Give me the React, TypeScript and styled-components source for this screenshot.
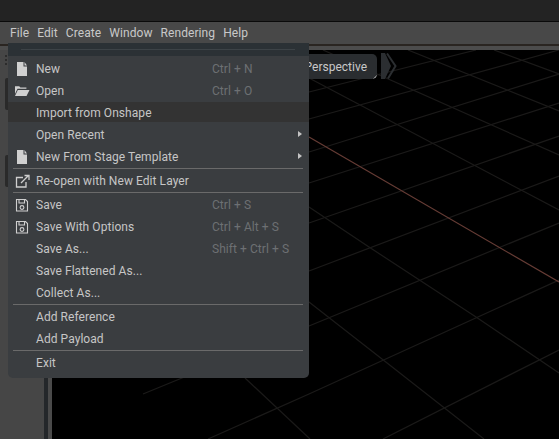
import React from "react";
import styled, { createGlobalStyle } from "styled-components";

const Global = createGlobalStyle`
  html, body { margin: 0; padding: 0; background: #222; }
  body { width: 559px; height: 439px; overflow: hidden; font-family: Roboto, "Liberation Sans", sans-serif; }
`;
const Page = styled.div`
  position: relative; width: 559px; height: 439px; display: flex; flex-direction: column; overflow: hidden; background: #222;
`;
const TitleBar = styled.div`
  height: 21px; flex: none; background: #232323; border-bottom: 1px solid #0a0a0a;
`;
const MenuBar = styled.div`
  height: 22px; flex: none; display: flex; align-items: center; gap: 8px; padding-left: 10px; background: #484848;
`;
const MenuTitle = styled.span`
  font-size: 12px; letter-spacing: 0.08px; color: #c8c8c8;
`;
const Rule = styled.div`
  height: 2px; flex: none; background: #2a2521;
`;
const Strip = styled.div`
  height: 4px; flex: none; background: #4c4c4c;
`;
const Body = styled.div`
  flex: 1; display: flex; min-height: 0;
`;
const Side = styled.div`
  width: 44px; flex: none; background: #464646; display: flex; flex-direction: column; align-items: flex-start; padding-left: 5px; box-sizing: border-box;
`;
const Dots = styled.div`
  width: 2px; height: 12px; margin-top: 5px; flex: none;
  background: repeating-linear-gradient(to bottom, #2c2c2c 0 2px, transparent 2px 4px);
`;
const Handle = styled.div<{ $top: number }>`
  width: 3px; height: 32px; flex: none; margin-top: ${p => p.$top}px; background: #2a2a2a; border-radius: 2px 0 0 2px;
`;
const Gutter = styled.div`
  width: 4px; flex: none; background: #24272a;
`;
const Gap = styled.div`
  width: 4px; flex: none; background: #4a4a4a;
`;
const Viewport = styled.div`
  flex: 1; position: relative; background: #000; overflow: hidden;
`;
const Grid = styled.svg`
  position: absolute; inset: 0; display: block;
`;
const Pill = styled.div`
  position: absolute; left: 225px; top: 4px; height: 25px; width: 100px; display: flex; align-items: center; justify-content: flex-end; padding-right: 10px; box-sizing: border-box; overflow: hidden;
  background: #2a2d30; border-radius: 0 5px 5px 0; color: #c8c8c8; font-size: 12px;
  &::after { content: ""; position: absolute; right: 0; bottom: 0; width: 0; height: 0; border-left: 4px solid transparent; border-bottom: 4px solid #d8d8d8; }
`;
const Chevrons = styled.svg`
  position: absolute; left: 329px; top: 3px;
`;
const Menu = styled.div`
  position: absolute; left: 8px; top: 43px; width: 301px; height: 335px; box-sizing: border-box; background: #3a3d40; border-radius: 0 0 5px 5px; display: flex; flex-direction: column;
`;
const MenuHead = styled.div`
  height: 13px; flex: none; background: #2b3135; display: flex; align-items: center; padding-left: 13px; margin-bottom: 1px;
  &::after { content: ""; width: 274px; height: 1px; background: #3d4347; margin-top: -1px; }
`;
const Item = styled.div<{ $hot?: boolean }>`
  height: 22px; flex: none; box-sizing: border-box; position: relative; display: flex; align-items: center; padding: 2px 20px 0 28px; font-size: 12px; letter-spacing: 0.06px; color: #c6c6c6;
  border-block: 1px solid transparent; background-clip: padding-box;
  background-color: ${p => p.$hot ? "#333333" : "transparent"};
`;
const Label = styled.span`
  flex: 1; white-space: nowrap;
`;
const Shortcut = styled.span`
  width: 77px; flex: none; white-space: nowrap; color: #6d7073;
`;
const Arrow = styled.i`
  position: absolute; right: 7px; top: 7px; width: 0; height: 0; border-left: 4px solid #c4c4c4; border-top: 3px solid transparent; border-bottom: 3px solid transparent;
`;
const Icon = styled.svg`
  position: absolute; left: 6px; top: 2px;
`;
const Sep = styled.div`
  height: 1px; margin: 0 6px 0 5px; background: #6a6a6a; flex: none;
`;
const SepGap = styled.div`
  height: 1px; flex: none;
`;

const FileIcon = () => (
  <Icon width="16" height="16" viewBox="0 0 16 16"><path d="M3 2h6.500v4.500H13V16H3zM10.500 2 13 5.500h-2.500z" fill="#d0d0d0" /></Icon>
);
const FolderIcon = () => (
  <Icon width="16" height="16" viewBox="0 0 16 16"><path d="M1 12V4.200h4.200l1.200 1.300h6v1.300H3.500zM3.800 8H15.500l-3 6H1z" fill="#d0d0d0" /></Icon>
);
const ExportIcon = () => (
  <Icon width="16" height="16" viewBox="0 0 16 16" fill="none" stroke="#cfcfcf" strokeWidth="1.300"><path d="M9 5.500H2.500v9.500h9.500V10M7 11l7-7M10.500 3.500H15V8" /></Icon>
);
const SaveIcon = () => (
  <Icon width="16" height="16" viewBox="0 0 16 16" fill="none" stroke="#cfcfcf" strokeWidth="1.100"><path d="M2.500 3.500h9l2 2v9.500h-11zM5 3.500v3.500h5.500V3.500" /><circle cx="8" cy="11.500" r="1.900" /></Icon>
);

const lines: string[] = [
  "309,78 559,210",
  "323,50 559,155",
  "408,50 559,111",
  "494,50 559,74",
  "309,207 369,247 476,317 559,373",
  "309,302 382,359 484,439",
  "245,378 310,439",
  "309,92 476,50",
  "309,119 559,50",
  "309,152 559,74",
  "309,183 559,103",
  "309,223 559,136",
  "309,271 559,176",
  "143,394 309,326 559,223",
  "208,439 309,394 559,280",
  "383,439 559,350",
];

const rows: Array<{ t: string; s?: string; i?: React.ReactNode; a?: boolean; h?: boolean; sep?: boolean }> = [
  { t: "New", s: "Ctrl + N", i: <FileIcon /> },
  { t: "Open", s: "Ctrl + O", i: <FolderIcon /> },
  { t: "Import from Onshape", h: true },
  { t: "Open Recent", a: true },
  { t: "New From Stage Template", a: true, i: <FileIcon />, sep: true },
  { t: "Re-open with New Edit Layer", i: <ExportIcon />, sep: true },
  { t: "Save", s: "Ctrl + S", i: <SaveIcon /> },
  { t: "Save With Options", s: "Ctrl + Alt + S", i: <SaveIcon /> },
  { t: "Save As...", s: "Shift + Ctrl + S" },
  { t: "Save Flattened As..." },
  { t: "Collect As...", sep: true },
  { t: "Add Reference" },
  { t: "Add Payload", sep: true },
  { t: "Exit" },
];

export default function App() {
  return (
    <Page>
      <Global />
      <TitleBar />
      <MenuBar>
        {["File", "Edit", "Create", "Window", "Rendering", "Help"].map(m => <MenuTitle key={m}>{m}</MenuTitle>)}
      </MenuBar>
      <Rule />
      <Strip />
      <Body>
        <Side>
          <Dots />
          <Handle $top={11} />
          <Handle $top={45} />
        </Side>
        <Gutter /><Gap />
        <Viewport>
          <Grid width="507" height="389" viewBox="52 50 507 389" fill="none">
            {lines.map(p => <polyline key={p} points={p} stroke="#1b1a19" strokeWidth="1.200" />)}
            <polyline points="309,137 559,282" stroke="#663c35" strokeWidth="1.200" />
          </Grid>
          <Pill>Perspective</Pill>
          <Chevrons width="16" height="26" viewBox="0 0 16 26" fill="none">
            <path d="M0 0H4L10 13 4 26H0z" fill="#2b2e31" />
            <path d="M6 0.500 14.500 13 7 25.500" stroke="#2b2e31" strokeWidth="2" />
          </Chevrons>
        </Viewport>
      </Body>
      <Menu>
        <MenuHead />
        {rows.map(r => (
          <React.Fragment key={r.t}>
            <Item $hot={r.h}>
              {r.i}
              <Label>{r.t}</Label>
              {r.s && <Shortcut>{r.s}</Shortcut>}
              {r.a && <Arrow />}
            </Item>
            {r.sep && <SepGap />}
            {r.sep && <Sep />}
          </React.Fragment>
        ))}
      </Menu>
    </Page>
  );
}
